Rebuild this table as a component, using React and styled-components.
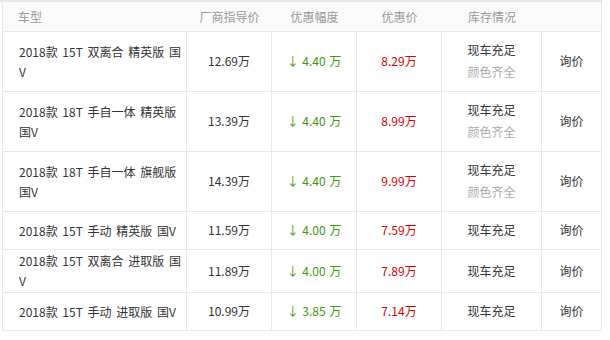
import React from 'react'
import styled, { createGlobalStyle } from 'styled-components'

const GlobalStyle = createGlobalStyle`
body {
  margin: 0;
  background: #fff;
  font-family: "Noto Sans CJK SC", "Liberation Sans", sans-serif;
  font-size: 12px;
  color: #333;
}
`

const Page = styled.div`
width: 602px;
border-top: 2px solid #e8e8e8;
`

const Table = styled.div`
margin-left: 2px;
width: 600px;
box-sizing: border-box;
border-left: 1px solid #e8e8e8;
display: grid;
grid-template-columns: 184px 85px 85px 85px 100px 60px;
`

const HeadCell = styled.div`
height: 30px;
box-sizing: border-box;
background: #fafafa;
border-bottom: 1px solid #e8e8e8;
border-right: ${p => (p.$last ? '1px solid #e8e8e8' : 'none')};
color: #999;
display: flex;
align-items: center;
justify-content: ${p => (p.$left ? 'flex-start' : 'center')};
padding-left: ${p => (p.$left ? '15px' : '0')};
`

const Cell = styled.div`
box-sizing: border-box;
border-right: 1px solid #e8e8e8;
border-bottom: 1px solid #e8e8e8;
display: flex;
flex-direction: column;
justify-content: center;
align-items: ${p => (p.$left ? 'flex-start' : 'center')};
padding: ${p => (p.$left ? '1px 0 1px 16px' : '7px 0 8px')};
line-height: ${p => (p.$left ? '20px' : '22px')};
word-spacing: ${p => (p.$left ? '2px' : '0')};
white-space: nowrap;
`

const Line = styled.span`
display: block;
`

const Drop = styled.span`
color: #3c9a0c;
word-spacing: 1px;
`

const Deal = styled.span`
color: #d80000;
`

const Note = styled.span`
display: block;
color: #aaa;
`

const cars = [
  { name: ['2018款 15T 双离合 精英版 国', 'V'], guide: '12.69万', drop: '4.40', price: '8.29万', colors: true },
  { name: ['2018款 18T 手自一体 精英版', '国V'], guide: '13.39万', drop: '4.40', price: '8.99万', colors: true },
  { name: ['2018款 18T 手自一体 旗舰版', '国V'], guide: '14.39万', drop: '4.40', price: '9.99万', colors: true },
  { name: ['2018款 15T 手动 精英版 国V'], guide: '11.59万', drop: '4.00', price: '7.59万' },
  { name: ['2018款 15T 双离合 进取版 国', 'V'], guide: '11.89万', drop: '4.00', price: '7.89万' },
  { name: ['2018款 15T 手动 进取版 国V'], guide: '10.99万', drop: '3.85', price: '7.14万' },
]

function App() {
  return (
    <Page>
      <GlobalStyle />
      <Table>
        <HeadCell $left>车型</HeadCell>
        <HeadCell>厂商指导价</HeadCell>
        <HeadCell>优惠幅度</HeadCell>
        <HeadCell>优惠价</HeadCell>
        <HeadCell>库存情况</HeadCell>
        <HeadCell $last />
        {cars.map((car, i) => (
          <React.Fragment key={i}>
            <Cell $left>
              {car.name.map((l, j) => <Line key={j}>{l}</Line>)}
            </Cell>
            <Cell>{car.guide}</Cell>
            <Cell><Drop>↓ {car.drop} 万</Drop></Cell>
            <Cell><Deal>{car.price}</Deal></Cell>
            <Cell>
              <Line>现车充足</Line>
              {car.colors && <Note>颜色齐全</Note>}
            </Cell>
            <Cell>询价</Cell>
          </React.Fragment>
        ))}
      </Table>
    </Page>
  )
}

export default App
